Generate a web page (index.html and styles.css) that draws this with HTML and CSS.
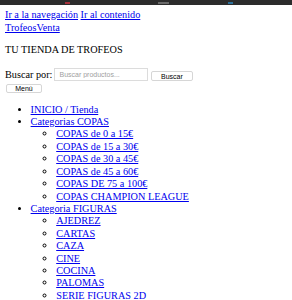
FILE: index.html
```html
<!DOCTYPE html>
<html lang="es">
	<head>
		<meta charset="utf-8">
		<title>TrofeosVenta</title>
		<link rel="stylesheet" href="styles.css">
	</head>
	<body>
		<!-- barra de arriba (cortada) -->
		<div class="topbar">
			<span class="bit bit-red"></span>
			<span class="bit bit-gray"></span>
			<span class="bit bit-blue"></span>
		</div>
		<div class="page">
			<div class="skip">
				<a href="#">Ir a la navegación</a> <a href="#">Ir al contenido</a>
			</div>
			<div class="site-title"><a href="#">TrofeosVenta</a></div>
			<p class="site-desc">TU TIENDA DE TROFEOS</p>
			<form class="search">
				<label>Buscar por:</label>
				<input type="search" placeholder="Buscar productos...">
				<button type="button" class="btn btn-search">Buscar</button>
			</form>
			<button type="button" class="btn btn-menu">Menú</button>
			<ul class="menu">
				<li><a href="#">INICIO / Tienda</a></li>
				<li><a href="#">Categorias COPAS</a>
					<ul>
						<li><a href="#">COPAS de 0 a 15€</a></li>
						<li><a href="#">COPAS de 15 a 30€</a></li>
						<li><a href="#">COPAS de 30 a 45€</a></li>
						<li><a href="#">COPAS de 45 a 60€</a></li>
						<li><a href="#">COPAS DE 75 a 100€</a></li>
						<li><a href="#">COPAS CHAMPION LEAGUE</a></li>
					</ul>
				</li>
				<li><a href="#">Categoria FIGURAS</a>
					<ul>
						<li><a href="#">AJEDREZ</a></li>
						<li><a href="#">CARTAS</a></li>
						<li><a href="#">CAZA</a></li>
						<li><a href="#">CINE</a></li>
						<li><a href="#">COCINA</a></li>
						<li><a href="#">PALOMAS</a></li>
						<li><a href="#">SERIE FIGURAS 2D</a></li>
					</ul>
				</li>
			</ul>
		</div>
	</body>
</html>
```

FILE: styles.css
```css
*{
	margin: 0;
	padding: 0;
}
body{
	font-family: "Liberation Serif", "Times New Roman", serif;
	font-size: 10.24px;
	line-height: 12.4px;
	color: #000;
	background: #fff;
}
a{
	color: #0000ee;
	text-decoration: underline;
}
.topbar{
	height: 5px;
	background: #2c2c2c;
	position: relative;
}
.bit{
	position: absolute;
	bottom: 1px;
	height: 2px;
}
.bit-red{
	left: 65px;
	width: 5px;
	background: #a8323c;
}
.bit-gray{
	left: 158px;
	width: 11px;
	background: #6a6a6a;
}
.bit-blue{
	left: 228px;
	width: 5px;
	background: #2b6f9a;
}
.page{
	padding: 3.6px 5px 0;
}
.site-title{
	margin-top: 1px;
}
.site-desc{
	margin: 10px 0 0;
}
.search{
	display: flex;
	align-items: center;
	margin-top: 11.3px;
	height: 13.3px;
}
.search label{
	margin-right: 2px;
}
.search input{
	width: 94px;
	height: 13.3px;
	box-sizing: border-box;
	border: 1px solid #dcdcdc;
	padding: 0 4px;
	font-family: "Liberation Sans", Arial, sans-serif;
	font-size: 7px;
	color: #000;
	outline: none;
	position: relative;
	top: 0;
}
.search input::placeholder{
	color: #a0a0a0;
}
.btn{
	display: block;
	box-sizing: border-box;
	height: 9.4px;
	background: #fff;
	border: 1px solid #d6d6d6;
	border-radius: 2px;
	font-family: "Liberation Sans", Arial, sans-serif;
	font-size: 7px;
	line-height: 7px;
	color: #000;
}
.btn-search{
	width: 41.6px;
	margin: 2.6px 0 0 2.7px;
}
.btn-menu{
	width: 36px;
	margin: 2.7px 0 0 1px;
}
.menu{
	margin-top: 10.2px;
	padding-left: 25.6px;
	list-style: disc;
}
.menu ul{
	padding-left: 25.6px;
	list-style: circle;
}
```
